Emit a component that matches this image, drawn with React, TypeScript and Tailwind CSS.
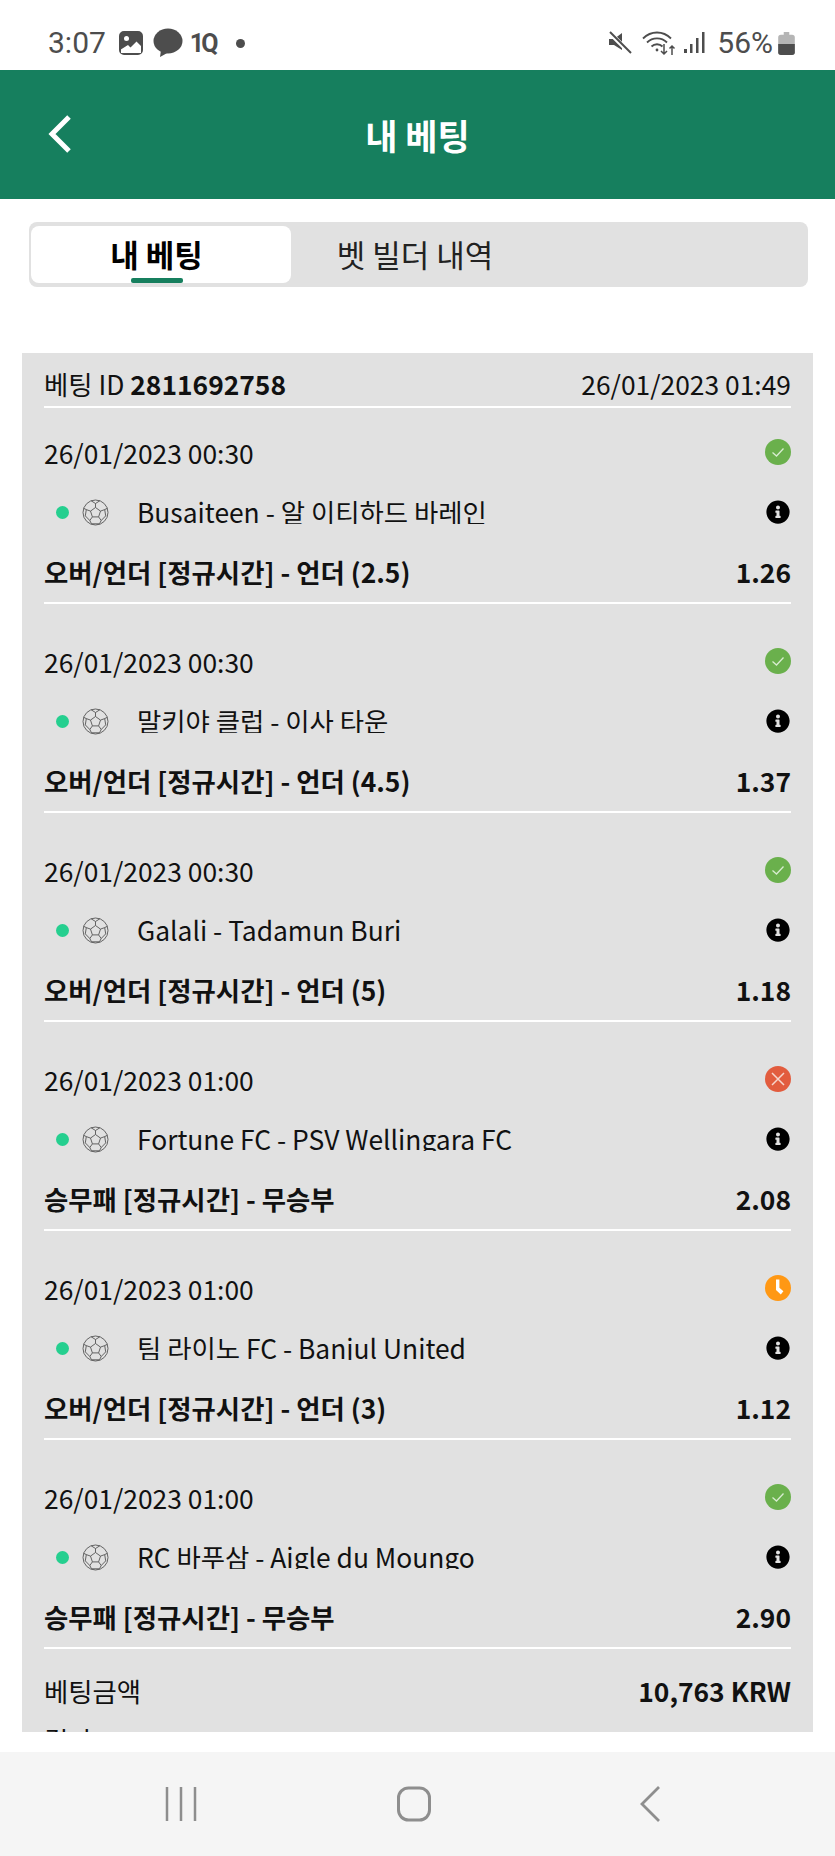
import { FaInfoCircle } from 'react-icons/fa';

type LegStatus = 'won' | 'lost' | 'pending';

interface Leg {
  time: string;
  match: string;
  market: string;
  odds: string;
  status: LegStatus;
}

const legs: Leg[] = [
  { time: '26/01/2023 00:30', match: 'Busaiteen - 알 이티하드 바레인', market: '오버/언더 [정규시간] - 언더 (2.5)', odds: '1.26', status: 'won' },
  { time: '26/01/2023 00:30', match: '말키야 클럽 - 이사 타운', market: '오버/언더 [정규시간] - 언더 (4.5)', odds: '1.37', status: 'won' },
  { time: '26/01/2023 00:30', match: 'Galali - Tadamun Buri', market: '오버/언더 [정규시간] - 언더 (5)', odds: '1.18', status: 'won' },
  { time: '26/01/2023 01:00', match: 'Fortune FC - PSV Wellingara FC', market: '승무패 [정규시간] - 무승부', odds: '2.08', status: 'lost' },
  { time: '26/01/2023 01:00', match: '팀 라이노 FC - Banjul United', market: '오버/언더 [정규시간] - 언더 (3)', odds: '1.12', status: 'pending' },
  { time: '26/01/2023 01:00', match: 'RC 바푸삼 - Aigle du Moungo', market: '승무패 [정규시간] - 무승부', odds: '2.90', status: 'won' },
];

function StatusIcon({ status }: { status: LegStatus }) {
  if (status === 'won') {
    return (
      <svg width="26" height="26" viewBox="0 0 26 26">
        <circle cx="13" cy="13" r="13" fill="#6ab04c" />
        <path d="M7.5 13.5l4 3.5 7-7.5" fill="none" stroke="#d8ecd0" strokeWidth="1.3" />
      </svg>
    );
  }
  if (status === 'lost') {
    return (
      <svg width="26" height="26" viewBox="0 0 26 26">
        <circle cx="13" cy="13" r="13" fill="#e25c3e" />
        <path d="M7 7l12 12M19 7L7 19" fill="none" stroke="#f6d5cc" strokeWidth="1.5" />
      </svg>
    );
  }
  return (
    <svg width="26" height="26" viewBox="0 0 26 26">
      <circle cx="13" cy="13" r="13" fill="#ff9814" />
      <path d="M11 4.5h3.4v8.2l4 3.6-2.6 3.2-4.8-4.6z" fill="#fff" />
    </svg>
  );
}

function SoccerBall() {
  return (
    <svg width="27" height="27" viewBox="0 0 27 27" fill="none" stroke="#555" strokeWidth="0.9">
      <circle cx="13.5" cy="13.5" r="12.5" />
      <path d="M13.5 8.5l5 3.6-1.9 5.8h-6.2l-1.9-5.800z" />
      <path d="M13.5 8.500V4.500M18.500 12.100l4.200-1.500M16.600 17.900l2.600 3.600M10.400 17.900l-2.600 3.600M8.500 12.100l-4.200-1.500" />
      <path d="M9.200 1.800l4.300 2.700 4.300-2.700M22.700 10.600l2.600-1.300M22.700 10.600l1 6.300M19.200 21.500l-1.700 3.300M19.200 21.500l4.500-4.600M7.800 21.500l1.700 3.300M7.800 21.500l-4.500-4.600M4.300 10.600l-2.600-1.300M4.300 10.600l-1 6.300" />
      <path d="M9.500 24.800h8" />
    </svg>
  );
}

function LegRow({ leg }: { leg: Leg }) {
  return (
    <div className="mb-[13px] h-[196px] border-b-2 border-white pt-[20px]">
      <div className="flex h-[50px] items-center justify-between">
        <span>{leg.time}</span>
        <span className="-mt-[2px] flex">
          <StatusIcon status={leg.status} />
        </span>
      </div>
      <div className="mt-[12px] flex h-[44px] items-center justify-between">
        <div className="flex items-center">
          <span className="ml-[12px] h-[13px] w-[13px] rounded-full bg-[#25cf8f]" />
          <span className="ml-[13px] flex">
            <SoccerBall />
          </span>
          <span className="ml-[28px] h-[24px] overflow-hidden leading-[24px]">{leg.match}</span>
        </div>
        <FaInfoCircle className="mr-[1px] text-black" size={24} />
      </div>
      <div className="mt-[16px] flex h-[44px] items-center justify-between font-bold">
        <span>{leg.market}</span>
        <span>{leg.odds}</span>
      </div>
    </div>
  );
}

function StatusBar() {
  return (
    <div className="flex h-[70px] shrink-0 items-center justify-between bg-white pl-[48px] pr-[40px] pt-[16px] font-['Roboto',sans-serif] text-[#4d4d4d]">
      <div className="flex items-center">
        <span className="text-[30px] leading-none">3:07</span>
        <svg className="ml-[13px]" width="24" height="24" viewBox="0 0 24 24">
          <rect x="1" y="1" width="22" height="22" rx="4" fill="none" stroke="#4d4d4d" strokeWidth="2" />
          <path d="M1 2h22v14l-5.500-5.500-6 6-2.500-2.500L1 19z" fill="#4d4d4d" />
          <path d="M2 20l6-5 3 2.500 6.500-6 4.500 4.500v6H2z" fill="#fff" />
          <circle cx="7.500" cy="7.500" r="2.500" fill="#fff" />
        </svg>
        <svg className="ml-[10px]" width="30" height="30" viewBox="0 0 30 30">
          <ellipse cx="15" cy="13" rx="14.500" ry="12.500" fill="#4d4d4d" />
          <path d="M8 22l-1 7 9-5z" fill="#4d4d4d" />
        </svg>
        <span className="ml-[7px] w-[26px] text-[25px] font-bold leading-none tracking-[-3px]">1Q</span>
        <span className="ml-[20px] h-[9px] w-[9px] rounded-full bg-[#4d4d4d]" />
      </div>
      <div className="flex items-center">
        <svg width="24" height="24" viewBox="0 0 24 24">
          <path d="M1 8h5l8-6v17l-8-5H1z" fill="#4d4d4d" />
          <path d="M1 1l22 22" stroke="#fff" strokeWidth="4.500" />
          <path d="M2 1l21 21" stroke="#4d4d4d" strokeWidth="2" />
        </svg>
        <svg className="ml-[10px]" width="34" height="26" viewBox="0 0 34 26" fill="none" stroke="#4d4d4d" strokeWidth="1.800">
          <path d="M1 8.500C9 .5 21 .5 29 8.500M5 12.500c5.500-5.500 14.500-5.500 20 0M9.500 16.500c3-3 8-3 11 0" />
          <circle cx="15" cy="20" r="1.400" fill="#4d4d4d" stroke="none" />
          <path d="M22 14v10M19 21l3 3 3-3M30 25v-9M27.500 18.500l2.500-2.500 2.500 2.500" strokeWidth="1.500" />
        </svg>
        <svg className="ml-[8px]" width="22" height="24" viewBox="0 0 22 24" fill="#4d4d4d">
          <rect x="0" y="18" width="3" height="4" />
          <rect x="6" y="13" width="2.500" height="9" />
          <rect x="12" y="7" width="2.500" height="15" />
          <rect x="18" y="1" width="2.500" height="21" />
        </svg>
        <span className="ml-[11px] text-[30px] leading-none">56%</span>
        <svg className="ml-[5px]" width="17" height="24" viewBox="0 0 18 26">
          <path d="M6 1h6v3h3a3 3 0 013 3v16a3 3 0 01-3 3H3a3 3 0 01-3-3V7a3 3 0 013-3h3z" fill="#b5b5b5" />
          <path d="M0 14h18v9a3 3 0 01-3 3H3a3 3 0 01-3-3z" fill="#4d4d4d" />
        </svg>
      </div>
    </div>
  );
}

export default function App() {
  return (
    <div className="flex h-[1856px] w-[835px] flex-col overflow-hidden bg-white font-['Noto_Sans_CJK_KR','Noto_Sans',sans-serif] text-[26.400px] text-[#111]">
      <StatusBar />

      <header className="relative flex h-[129px] shrink-0 items-center justify-center bg-[#167f5e] text-white">
        <svg className="absolute left-[48px] top-[44px]" width="24" height="40" viewBox="0 0 24 40" fill="none" stroke="#fff" strokeWidth="5">
          <path d="M21 3L4 20l17 17" />
        </svg>
        <h1 className="text-[35px] font-bold leading-none">내 베팅</h1>
      </header>

      <div className="flex-1 overflow-hidden px-[22px] pt-[23px]">
        <div className="mx-[7px] flex h-[65px] w-[779px] rounded-[8px] bg-[#e1e1e1] p-[4px_2px]">
          <div className="relative flex w-[260px] items-center justify-center rounded-[8px] bg-white pr-[9px] text-[31px] font-bold text-black">
            내 베팅
            <span className="absolute bottom-0 left-[100px] h-[5px] w-[52px] rounded-[2px] bg-[#167f5e]" />
          </div>
          <div className="flex w-[248px] items-center justify-center text-[31px] text-[#222]">벳 빌더 내역</div>
        </div>

        <div className="mt-[66px] h-[1379px] w-[791px] overflow-hidden bg-[#e1e1e1] px-[22px]">
          <div className="flex h-[55px] items-center justify-between border-b-2 border-white pt-[9px]">
            <span>
              베팅 ID <b className="font-bold">2811692758</b>
            </span>
            <span>26/01/2023 01:49</span>
          </div>

          {legs.map((leg, i) => (
            <LegRow key={i} leg={leg} />
          ))}

          <div className="mt-[20px] flex h-[44px] items-center justify-between">
            <span>베팅금액</span>
            <b className="font-bold">10,763 KRW</b>
          </div>
          <div className="mt-[5px] flex h-[44px] items-center justify-between">
            <span>결과</span>
            <b className="font-bold">0</b>
          </div>
        </div>
      </div>

      <nav className="flex h-[104px] shrink-0 items-center bg-[#f5f5f5]">
        <svg className="ml-[164px]" width="34" height="36" viewBox="0 0 34 36" fill="none" stroke="#8e8e8e" strokeWidth="2.500">
          <path d="M3 1v34M17 1v34M31 1v34" />
        </svg>
        <svg className="ml-[198px]" width="36" height="36" viewBox="0 0 36 36" fill="none" stroke="#8e8e8e" strokeWidth="3">
          <rect x="2.500" y="2" width="31" height="32" rx="10" />
        </svg>
        <svg className="ml-[207px]" width="22" height="38" viewBox="0 0 22 38" fill="none" stroke="#8e8e8e" strokeWidth="2.800">
          <path d="M20 2L3 19l17 17" />
        </svg>
      </nav>
    </div>
  );
}
